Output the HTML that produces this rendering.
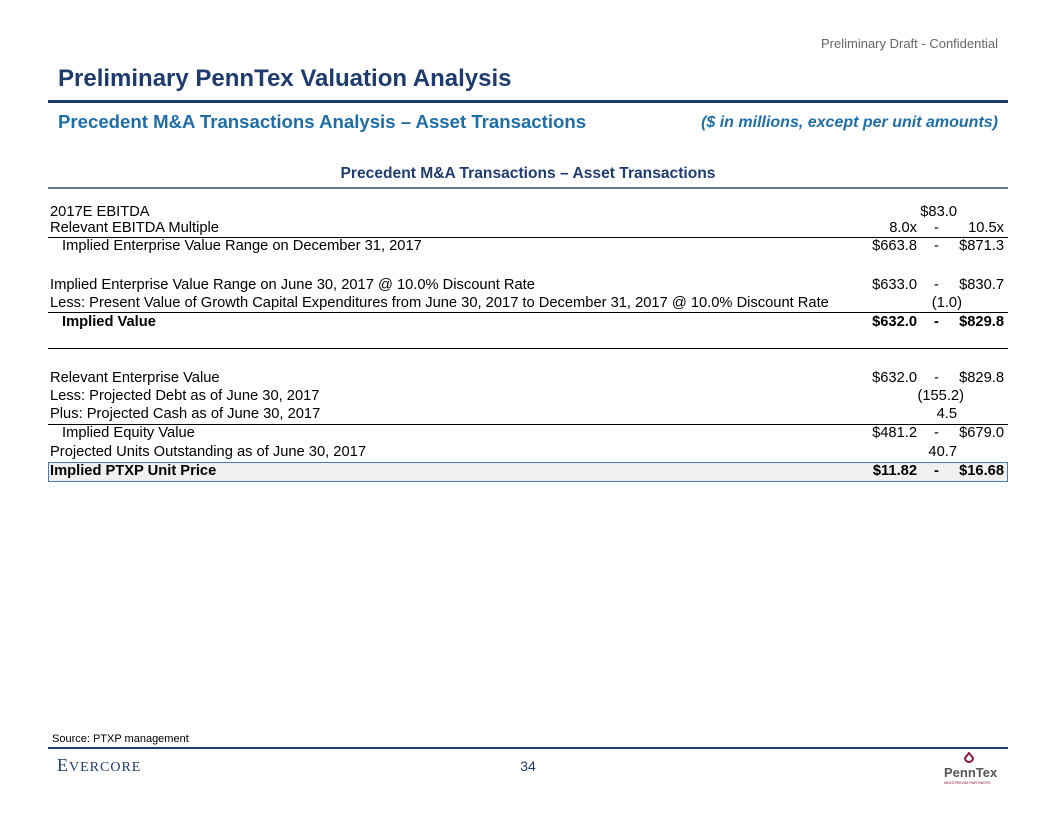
<!DOCTYPE html><html><head><style>
body{margin:0;width:1056px;height:816px;position:relative;background:#fff;font-family:"Liberation Sans",Arial,sans-serif;overflow:hidden}
.a{position:absolute;white-space:nowrap}
.r{position:absolute;left:50px;width:956px;height:18px;font-size:14.7px;color:#000;line-height:18px}
.r span{position:absolute;top:0}
.l{left:0}.lo{right:89px}.d{left:884px}.hi{right:2px}.c{right:49px}
.hl{position:absolute;left:48px;width:960px;background:#000}
</style></head><body>
<div class="a" style="right:58px;top:36px;font-size:13px;color:#666">Preliminary Draft - Confidential</div>
<div class="a" style="left:58px;top:65px;font-size:24px;font-weight:bold;color:#1f3c6e">Preliminary PennTex Valuation Analysis</div>
<div class="a" style="left:48px;top:100px;width:960px;height:3px;background:#1f3c6e"></div>
<div class="a" style="left:58px;top:111px;font-size:18.6px;font-weight:bold;color:#1f6ea8">Precedent M&amp;A Transactions Analysis – Asset Transactions</div>
<div class="a" style="right:58px;top:114px;font-size:16px;font-weight:bold;font-style:italic;color:#1f6ea8">($ in millions, except per unit amounts)</div>
<div class="a" style="left:0;width:1056px;text-align:center;top:165px;font-size:15.6px;font-weight:bold;color:#1f3c6e">Precedent M&amp;A Transactions – Asset Transactions</div>
<div class="a" style="left:48px;top:187px;width:960px;height:2px;background:#6b7a8a"></div>

<div class="r" style="top:203px"><span class="l">2017E EBITDA</span><span class="c">$83.0</span></div>
<div class="r" style="top:219px"><span class="l">Relevant EBITDA Multiple</span><span class="lo">8.0x</span><span class="d">-</span><span class="hi">10.5x</span></div>
<div class="hl" style="top:237px;height:1px"></div>
<div class="r" style="top:237px"><span class="l" style="left:12px">Implied Enterprise Value Range on December 31, 2017</span><span class="lo">$663.8</span><span class="d">-</span><span class="hi">$871.3</span></div>
<div class="r" style="top:276px"><span class="l">Implied Enterprise Value Range on June 30, 2017 @ 10.0% Discount Rate</span><span class="lo">$633.0</span><span class="d">-</span><span class="hi">$830.7</span></div>
<div class="r" style="top:294px"><span class="l">Less: Present Value of Growth Capital Expenditures from June 30, 2017 to December 31, 2017 @ 10.0% Discount Rate</span><span class="c" style="right:44px">(1.0)</span></div>
<div class="hl" style="top:312px;height:1px"></div>
<div class="r" style="top:313px;font-weight:bold"><span class="l" style="left:12px">Implied Value</span><span class="lo">$632.0</span><span class="d">-</span><span class="hi">$829.8</span></div>
<div class="hl" style="top:348px;height:1px"></div>
<div class="r" style="top:369px"><span class="l">Relevant Enterprise Value</span><span class="lo">$632.0</span><span class="d">-</span><span class="hi">$829.8</span></div>
<div class="r" style="top:387px"><span class="l">Less: Projected Debt as of June 30, 2017</span><span class="c" style="right:42px">(155.2)</span></div>
<div class="r" style="top:405px"><span class="l">Plus: Projected Cash as of June 30, 2017</span><span class="c">4.5</span></div>
<div class="hl" style="top:424px;height:1px"></div>
<div class="r" style="top:424px"><span class="l" style="left:12px">Implied Equity Value</span><span class="lo">$481.2</span><span class="d">-</span><span class="hi">$679.0</span></div>
<div class="r" style="top:443px"><span class="l">Projected Units Outstanding as of June 30, 2017</span><span class="c">40.7</span></div>
<div class="a" style="left:48px;top:462px;width:958px;height:18px;background:#f0f0f0;border:1px solid #4a7ab8"></div>
<div class="r" style="top:462px;font-weight:bold"><span class="l">Implied PTXP Unit Price</span><span class="lo">$11.82</span><span class="d">-</span><span class="hi">$16.68</span></div>

<div class="a" style="left:52px;top:733px;font-size:11px;color:#000">Source: PTXP management</div>
<div class="a" style="left:48px;top:747px;width:960px;height:2px;background:#1f3c6e"></div>
<div class="a" style="left:57px;top:755px;font-family:'Liberation Serif',serif;font-size:18px;color:#1f3c6e;letter-spacing:1px">E<span style="font-size:14px">VERCORE</span></div>
<div class="a" style="left:0;width:1056px;text-align:center;top:758px;font-size:14px;color:#1f3c6e">34</div>
<svg class="a" style="left:962px;top:752px" width="14" height="14" viewBox="0 0 14 14"><path d="M7 1 L3 6 A4 4 0 1 0 11 6 Z" fill="none" stroke="#8b1a3a" stroke-width="2"/></svg>
<div class="a" style="left:944px;top:765px;font-size:13px;font-weight:bold;color:#555">PennTex</div>
<div class="a" style="left:944px;top:780px;font-size:4px;color:#8b1a3a">MIDSTREAM PARTNERS</div>
</body></html>
